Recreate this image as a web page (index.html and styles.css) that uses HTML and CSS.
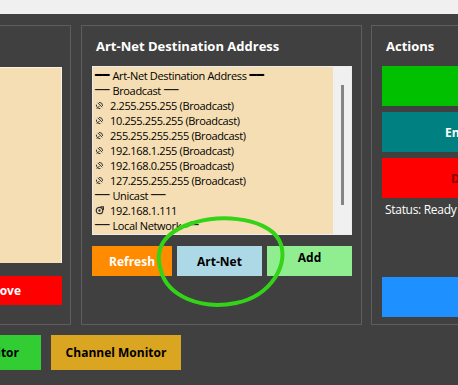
FILE: index.html
```html
<!DOCTYPE html>
<html>
<head>
<meta charset="utf-8">
<link rel="stylesheet" href="styles.css">
</head>
<body>
<div class="topbar"></div>
<div class="panels">
  <div class="panel panel-left">
    <div class="left-list"></div>
    <div class="btn btn-remove"><span>Remove</span></div>
  </div>
  <div class="panel panel-mid">
    <div class="panel-title">Art-Net Destination Address</div>
    <div class="listbox">
      <div class="list-items">
        <div class="item"><span class="dash heavy">━━</span> Art-Net Destination Address <span class="dash heavy">━━</span></div>
        <div class="item"><span class="dash">──</span> Broadcast <span class="dash">──</span></div>
        <div class="item"><svg class="ico" viewBox="0 0 10 10"><path d="M2 8.5 L5 5.5 M1.5 4 Q1.5 8.5 6 8.5 M3 2 L8 7 M4.5 1.5 Q8.5 1.5 8.5 5.5" fill="none" stroke="#333" stroke-width="1.1"/></svg>2.255.255.255 (Broadcast)</div>
        <div class="item"><svg class="ico" viewBox="0 0 10 10"><path d="M2 8.5 L5 5.5 M1.5 4 Q1.5 8.5 6 8.5 M3 2 L8 7 M4.5 1.5 Q8.5 1.5 8.5 5.5" fill="none" stroke="#333" stroke-width="1.1"/></svg>10.255.255.255 (Broadcast)</div>
        <div class="item"><svg class="ico" viewBox="0 0 10 10"><path d="M2 8.5 L5 5.5 M1.5 4 Q1.5 8.5 6 8.5 M3 2 L8 7 M4.5 1.5 Q8.5 1.5 8.5 5.5" fill="none" stroke="#333" stroke-width="1.1"/></svg>255.255.255.255 (Broadcast)</div>
        <div class="item"><svg class="ico" viewBox="0 0 10 10"><path d="M2 8.5 L5 5.5 M1.5 4 Q1.5 8.5 6 8.5 M3 2 L8 7 M4.5 1.5 Q8.5 1.5 8.5 5.5" fill="none" stroke="#333" stroke-width="1.1"/></svg>192.168.1.255 (Broadcast)</div>
        <div class="item"><svg class="ico" viewBox="0 0 10 10"><path d="M2 8.5 L5 5.5 M1.5 4 Q1.5 8.5 6 8.5 M3 2 L8 7 M4.5 1.5 Q8.5 1.5 8.5 5.5" fill="none" stroke="#333" stroke-width="1.1"/></svg>192.168.0.255 (Broadcast)</div>
        <div class="item"><svg class="ico" viewBox="0 0 10 10"><path d="M2 8.5 L5 5.5 M1.5 4 Q1.5 8.5 6 8.5 M3 2 L8 7 M4.5 1.5 Q8.5 1.5 8.5 5.5" fill="none" stroke="#333" stroke-width="1.1"/></svg>127.255.255.255 (Broadcast)</div>
        <div class="item"><span class="dash">──</span> Unicast <span class="dash">──</span></div>
        <div class="item"><svg class="ico" viewBox="0 0 10 10"><circle cx="5" cy="5" r="3.6" fill="none" stroke="#333" stroke-width="1.4"/><circle cx="5" cy="5" r="1.3" fill="#333"/><path d="M6 1 L9.5 1 L9.5 4.5" fill="none" stroke="#333" stroke-width="1.2"/></svg>192.168.1.111</div>
        <div class="item"><span class="dash">──</span> Local Network <span class="dash">──</span></div>
      </div>
      <div class="scrollbar"><div class="thumb"></div></div>
    </div>
    <div class="btn-row">
      <div class="btn btn-refresh">Refresh</div>
      <div class="btn btn-artnet">Art-Net</div>
      <div class="btn btn-add">Add</div>
    </div>
  </div>
  <div class="panel panel-right">
    <div class="panel-title">Actions</div>
    <div class="btn btn-start">Start</div>
    <div class="btn btn-enable">Enable</div>
    <div class="btn btn-disable">Disable</div>
    <div class="status">Status: Ready</div>
    <div class="btn btn-blue">Settings</div>
  </div>
</div>
<div class="bottom-row">
  <div class="btn btn-dmx"><span>DMX Monitor</span></div>
  <div class="btn btn-channel">Channel Monitor</div>
</div>
<svg class="annotation" width="458" height="385" viewBox="0 0 458 385">
  <path d="M186 226 C 212 213, 266 216, 279 240 C 291 263, 271 296, 236 303 C 200 310, 168 296, 161 271 C 154 249, 163 233, 192 223" fill="none" stroke="#33d417" stroke-width="4" stroke-linecap="round"/>
</svg>
</body>
</html>
```

FILE: styles.css
```css
html, body {
  margin: 0;
  padding: 0;
}
body {
  width: 458px;
  height: 385px;
  overflow: hidden;
  background: #404040;
  font-family: "Open Sans", "Noto Sans", sans-serif;
  position: relative;
  color: #fff;
}
.topbar {
  height: 14px;
  background: #f0f0f0;
}
.panels {
  display: flex;
  margin-top: 11px;
  height: 300px;
}
.panel {
  box-sizing: border-box;
  height: 300px;
  border: 1px solid #5e5e5e;
  display: flex;
  flex-direction: column;
  flex: none;
}
.panel-left {
  width: 71px;
  border-left: none;
}
.panel-mid {
  width: 281px;
  margin-left: 10px;
  padding: 11px 8px 0 10px;
}
.panel-right {
  width: 200px;
  margin-left: 9px;
  border-right: none;
  padding: 11px 0 0 10px;
}
.panel-title {
  font-size: 13px;
  font-weight: 700;
  line-height: 18px;
  height: 18px;
  padding-left: 4px;
  white-space: nowrap;
}
.left-list {
  margin-top: 41px;
  width: 62px;
  height: 196px;
  box-sizing: border-box;
  background: #f5deb3;
  border-top: 1px solid #f8f2e6;
  border-right: 1px solid #f8f2e6;
}
.btn {
  display: flex;
  align-items: center;
  justify-content: center;
  font-size: 12px;
  font-weight: 700;
  white-space: nowrap;
  overflow: hidden;
  box-sizing: border-box;
  flex: none;
}
.btn-remove {
  margin-top: 13px;
  width: 62px;
  height: 29px;
  background: #ff0000;
  color: #fff;
  justify-content: flex-end;
  padding-right: 41px;
}
.listbox {
  margin-top: 11px;
  width: 260px;
  height: 169px;
  box-sizing: border-box;
  border: 1px solid #ececec;
  background: #f5deb3;
  display: flex;
  overflow: hidden;
  flex: none;
}
.list-items {
  flex: 1;
  padding: 1px 0 0 2px;
  color: #000;
  font-size: 11px;
  line-height: 15px;
  letter-spacing: -0.35px;
  overflow: hidden;
}
.item {
  white-space: nowrap;
  height: 15px;
  display: flex;
  align-items: center;
}
.dash {
  font-family: "DejaVu Sans", sans-serif;
  font-size: 12px;
  letter-spacing: 0;
  margin: 0 3px 0 0;
}
.item .dash:last-child {
  margin: 0 0 0 3px;
}
.ico {
  width: 9px;
  height: 9px;
  margin: 0 6px 0 0;
  flex: none;
}
.scrollbar {
  width: 18px;
  background: #f0f0f0;
  position: relative;
  flex: none;
}
.thumb {
  position: absolute;
  left: 8px;
  top: 18px;
  width: 3px;
  height: 120px;
  background: #858585;
}
.btn-row {
  display: flex;
  gap: 5px;
  margin-top: 11px;
}
.btn-row .btn {
  height: 30px;
}
.btn-refresh {
  width: 80px;
  background: #ff8c00;
  color: #fff;
}
.btn-artnet {
  width: 85px;
  background: #add8e6;
  color: #000;
}
.btn-add {
  width: 85px;
  background: #90ee90;
  color: #000;
  padding-bottom: 8px;
}
.panel-right .btn {
  width: 200px;
  height: 40px;
  justify-content: flex-start;
}
.btn-start {
  margin-top: 11px;
  background: #00c000;
  color: #fff;
  padding-left: 90px;
}
.btn-enable {
  margin-top: 6px;
  background: #008080;
  color: #fff;
  padding-left: 63px;
}
.btn-disable {
  margin-top: 6px;
  background: #ff0000;
  color: #8b0000;
  padding-left: 69px;
}
.status {
  font-size: 12px;
  line-height: 16px;
  margin-top: 4px;
  padding-left: 3px;
  letter-spacing: -0.3px;
  white-space: nowrap;
}
.btn-blue {
  margin-top: 59px;
  background: #1e90ff;
  color: #fff;
  padding-left: 90px;
}
.bottom-row {
  display: flex;
  gap: 10px;
  margin-top: 10px;
}
.bottom-row .btn {
  height: 35px;
  color: #000;
}
.btn-dmx {
  width: 41px;
  background: #32cd32;
  justify-content: flex-end;
  padding-right: 22px;
}
.btn-channel {
  width: 130px;
  background: #daa520;
}
.annotation {
  position: absolute;
  left: 0;
  top: 0;
  pointer-events: none;
}
```
